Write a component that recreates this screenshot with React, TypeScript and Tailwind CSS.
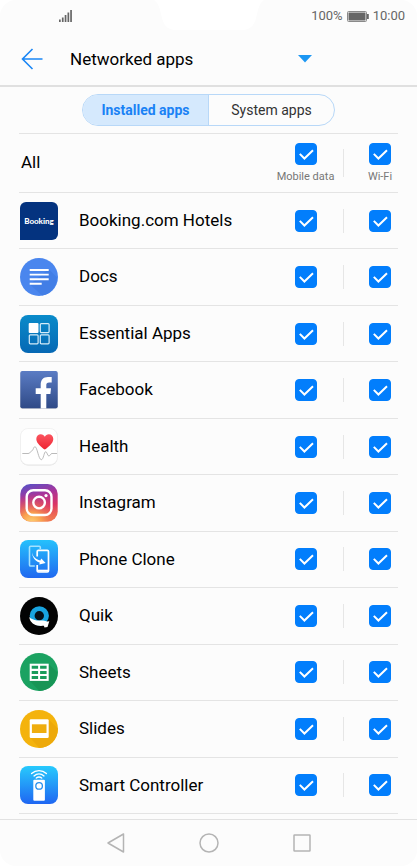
import { useState, type ReactNode } from 'react';
import clsx from 'clsx';

type Access = { mobile: boolean; wifi: boolean };

function BookingIcon() {
  return (
    <span className="flex size-[38px] items-center justify-center rounded-md rounded-bl-none bg-[#04337f] font-['Lato'] text-[8px] font-black text-white">
      Booking
    </span>
  );
}

function DocsIcon() {
  return (
    <svg viewBox="0 0 38 38" className="size-[38px]">
      <circle cx="19" cy="19" r="19" fill="#4a86ee" />
      <path d="M28.7 11 37 19.5A19 19 0 0 1 22 37.6L10 26.5Z" fill="#427ee6" />
      <path d="M9.7 12h19M9.7 16.6h19M9.7 21.2h19M9.7 25.7h12" stroke="#fff" strokeWidth="1.9" />
    </svg>
  );
}

function EssentialIcon() {
  return (
    <svg viewBox="0 0 38 38" className="size-[38px]">
      <defs>
        <linearGradient id="essential" x1="0" y1="0" x2="0" y2="1">
          <stop offset="0" stopColor="#0a8bca" />
          <stop offset="1" stopColor="#0668b4" />
        </linearGradient>
      </defs>
      <rect width="38" height="38" rx="8" fill="url(#essential)" />
      <rect x="8.7" y="8" width="9.8" height="10" rx="1" fill="#fff" />
      <g fill="none" stroke="#d6ecf8" strokeWidth="1.2">
        <rect x="20.3" y="8.6" width="8.8" height="9" rx="1" />
        <rect x="9.3" y="19.8" width="8.8" height="9" rx="1" />
        <rect x="20.3" y="19.8" width="8.8" height="9" rx="1" />
      </g>
    </svg>
  );
}

function FacebookIcon() {
  return (
    <svg viewBox="0 0 38 38" className="size-[38px]">
      <defs>
        <linearGradient id="facebook" x1="0" y1="0" x2="0" y2="1">
          <stop offset="0" stopColor="#5b7cc4" />
          <stop offset="1" stopColor="#2f4a87" />
        </linearGradient>
      </defs>
      <rect x="0.3" y="0.5" width="37.4" height="37.5" rx="2" fill="#c9ccd4" />
      <rect x="0.3" y="0" width="37.4" height="37.2" rx="2" fill="url(#facebook)" />
      <path
        d="M20.7 37.5V23h-5v-5.7h5v-3.6c0-5 2.8-7.7 7.2-7.7h3.8v5.5h-2.6c-2.1 0-2.8.9-2.8 2.6v3.2H31l-.6 5.7h-4.1v14.5z"
        fill="#fff"
      />
    </svg>
  );
}

function HealthIcon() {
  return (
    <svg viewBox="0 0 38 38" className="size-[38px]">
      <defs>
        <linearGradient id="heart" x1="0" y1="0" x2="0" y2="1">
          <stop offset="0" stopColor="#fb5560" />
          <stop offset="1" stopColor="#ee2431" />
        </linearGradient>
      </defs>
      <rect x="0.5" y="1" width="37" height="36.5" rx="7.5" fill="#dedede" />
      <rect x="0.5" y="0.5" width="37" height="36.2" rx="7.5" fill="#fff" stroke="#efefef" strokeWidth="0.8" />
      <path
        d="M24.8 21.6c-3.4-2.4-8.5-6.3-8.5-10.6 0-2.9 2.1-4.8 4.5-4.8 1.8 0 3.2.9 4 2.5.8-1.6 2.2-2.5 4-2.5 2.4 0 4.5 1.9 4.5 4.8 0 4.300-5.100 8.200-8.500 10.600z"
        fill="url(#heart)"
      />
      <path
        d="M2.300 25.500H8c1.500 0 2.200-.9 3-2 .8-1.300 1.300-.4 1.900-1.800.8-1.800 1.200-3 2.100-3 2.200 0 3.500 13 6.300 13 2.300 0 2.700-8 4.400-8 1.500 0 1.600 4.300 3.200 4.300 1.200 0 1.500-2.500 3.100-2.500h5"
        fill="none"
        stroke="#a9a9a9"
        strokeWidth="0.8"
      />
    </svg>
  );
}

function InstagramIcon() {
  return (
    <svg viewBox="0 0 38 38" className="size-[38px]">
      <defs>
        <linearGradient id="instaBase" x1="0.2" y1="0" x2="0.5" y2="1">
          <stop offset="0" stopColor="#5b4fc4" />
          <stop offset="0.35" stopColor="#a8349b" />
          <stop offset="0.7" stopColor="#dc3465" />
          <stop offset="1" stopColor="#f2764c" />
        </linearGradient>
        <radialGradient id="instaGlow" cx="0.3" cy="1.05" r="0.8">
          <stop offset="0" stopColor="#fed373" />
          <stop offset="0.35" stopColor="#f9a04f" />
          <stop offset="1" stopColor="#e0405c" stopOpacity="0" />
        </radialGradient>
      </defs>
      <rect x="0.3" width="37.4" height="37.4" rx="10" fill="url(#instaBase)" />
      <rect x="0.3" width="37.4" height="37.4" rx="10" fill="url(#instaGlow)" />
      <g fill="none" stroke="#fff" strokeWidth="2.4">
        <rect x="6.7" y="6.2" width="24.8" height="24.8" rx="6.5" />
        <circle cx="19.1" cy="18.6" r="5.8" />
      </g>
      <circle cx="26" cy="11.6" r="1.6" fill="#fff" />
    </svg>
  );
}

function PhoneCloneIcon() {
  return (
    <svg viewBox="0 0 38 38" className="size-[38px]">
      <defs>
        <linearGradient id="clone" x1="0" y1="0" x2="0" y2="1">
          <stop offset="0" stopColor="#25c1fc" />
          <stop offset="1" stopColor="#2068f0" />
        </linearGradient>
      </defs>
      <rect width="38" height="38" rx="8" fill="url(#clone)" />
      <path
        d="M20.300 9V7.300c0-.7-.4-1.100-1.100-1.100h-8.600c-.7 0-1.100.4-1.100 1.100v17.600c0 .7.4 1.100 1.100 1.100h4.200"
        fill="none"
        stroke="#a4e2ff"
        strokeWidth="1.6"
      />
      <path
        d="M17.200 16.500v-4.900c0-.7.5-1.200 1.200-1.200h8.900c.7 0 1.200.5 1.200 1.200v19.200c0 .7-.5 1.200-1.200 1.200h-8.900c-.7 0-1.200-.5-1.200-1.200v-5.900"
        fill="none"
        stroke="#fff"
        strokeWidth="1.7"
      />
      <path d="M17.200 29.700h11.300v2h-11.300z" fill="#fff" />
      <path d="M12 12.300c.8 4.200 3.500 7 8.300 8.200l1-2 4.300 4.400-6.300 1.700.4-2c-4.700-1.500-7.500-5.300-7.700-10.300z" fill="#fff" />
    </svg>
  );
}

function QuikIcon() {
  return (
    <svg viewBox="0 0 38 38" className="size-[38px]">
      <circle cx="19" cy="19" r="19" fill="#030303" />
      <circle cx="19.3" cy="18.8" r="9.6" fill="#18a4e0" />
      <circle cx="19.3" cy="18.8" r="4.7" fill="#061018" />
      <path
        d="M9.300 20c2.200 2.200 4.500 2.900 7.700 3.400 2 .4 4.400.1 6.200.2 1.600.1 2.800.9 4 .9l2.100-.3-1.800 5.800-3 .5-.6-1.700c-2.300.2-4.600.3-6.700-.3-4.500-1.200-7.600-4.300-7.900-8.500z"
        fill="#fff"
      />
    </svg>
  );
}

function SheetsIcon() {
  return (
    <svg viewBox="0 0 38 38" className="size-[38px]">
      <circle cx="19" cy="19" r="19" fill="#1ba261" />
      <path d="M28.700 11 37.500 19.600A19 19 0 0 1 19.500 38L9.700 27.700Z" fill="#189556" />
      <rect x="9.7" y="10.7" width="19" height="17.2" fill="#fff" />
      <path
        d="M11.700 12.800h6.400v3h-6.400zM20.100 12.800h6.500v3h-6.500zM11.700 17.900h6.400v3h-6.400zM20.100 17.900h6.500v3h-6.500zM11.700 22.900h6.400v3h-6.400zM20.100 22.900h6.500v3h-6.500z"
        fill="#199c5b"
      />
    </svg>
  );
}

function SlidesIcon() {
  return (
    <svg viewBox="0 0 38 38" className="size-[38px]">
      <circle cx="19" cy="19" r="19" fill="#f4b30d" />
      <path d="M28.500 9.300 37.800 18.600A19 19 0 0 1 19.500 38L10 27.800Z" fill="#eda90a" />
      <rect x="9.7" y="9.2" width="19" height="18.8" rx="1.2" fill="#fff" />
      <rect x="11.9" y="14.3" width="14.6" height="8.7" fill="#efad0e" />
    </svg>
  );
}

function SmartControllerIcon() {
  return (
    <svg viewBox="0 0 38 38" className="size-[38px]">
      <defs>
        <linearGradient id="remote" x1="0" y1="0" x2="0" y2="1">
          <stop offset="0" stopColor="#27cafd" />
          <stop offset="1" stopColor="#1f66f2" />
        </linearGradient>
      </defs>
      <rect width="38" height="38" rx="8" fill="url(#remote)" />
      <g fill="none" stroke="#fff" strokeWidth="1.4" strokeLinecap="round">
        <path d="M11.600 7.600c4.300-4 10.500-4 14.800 0" />
        <path d="M14 9.900c3-2.700 7-2.700 10 0" />
        <path d="M16.300 12c1.700-1.300 3.700-1.300 5.400 0" />
      </g>
      <rect x="13.3" y="13.8" width="11.6" height="21" rx="1" fill="#fff" />
      <circle cx="19.1" cy="19.9" r="3.3" fill="none" stroke="#258fee" strokeWidth="1.3" />
    </svg>
  );
}

const apps: { name: string; icon: ReactNode }[] = [
  { name: 'Booking.com Hotels', icon: <BookingIcon /> },
  { name: 'Docs', icon: <DocsIcon /> },
  { name: 'Essential Apps', icon: <EssentialIcon /> },
  { name: 'Facebook', icon: <FacebookIcon /> },
  { name: 'Health', icon: <HealthIcon /> },
  { name: 'Instagram', icon: <InstagramIcon /> },
  { name: 'Phone Clone', icon: <PhoneCloneIcon /> },
  { name: 'Quik', icon: <QuikIcon /> },
  { name: 'Sheets', icon: <SheetsIcon /> },
  { name: 'Slides', icon: <SlidesIcon /> },
  { name: 'Smart Controller', icon: <SmartControllerIcon /> },
];

function CheckBox({ label, checked, onChange }: { label: string; checked: boolean; onChange: () => void }) {
  return (
    <span className="relative block size-[22px]">
      <input
        type="checkbox"
        aria-label={label}
        checked={checked}
        onChange={onChange}
        className="block size-[22px] cursor-pointer appearance-none rounded border border-gray-400 peer checked:border-[#027efc] checked:bg-[#027efc]"
      />
      <svg viewBox="0 0 22 22" className="pointer-events-none absolute inset-0 hidden size-[22px] peer-checked:block">
        <path d="M4.800 10.900 9.400 15.500 18 7.300" fill="none" stroke="#fff" strokeWidth="2" />
      </svg>
    </span>
  );
}

function StatusBar() {
  return (
    <div className="relative flex h-8 items-center justify-between pr-3 pl-[59px] text-[13px] text-[#666]">
      {/* display notch */}
      <svg viewBox="0 0 110 31" className="absolute top-0 left-1/2 h-[31px] w-[110px] -translate-x-1/2">
        <path d="M0 0c6 4 6 12 8 18 2 8 6 12 14 12h66c8 0 12-4 14-12 2-6 2-14 8-18z" fill="#fff" />
      </svg>
      <svg viewBox="0 0 14 12" className="h-3 w-3.5" fill="#666">
        <path d="M0 9.500h1.700V12H0zM2.900 7.500h1.700V12H2.900zM5.700 5h1.700v7H5.700zM8.500 2.500h1.700V12H8.500zM11.200 0h1.700v12h-1.700z" />
      </svg>
      <div className="flex items-center gap-1">
        <span>100%</span>
        <svg viewBox="0 0 22 11" className="h-[11px] w-[22px]">
          <rect x="0.5" y="0.5" width="19" height="10" rx="1" fill="none" stroke="#8a8a8a" />
          <rect x="1.5" y="1.5" width="17" height="8" fill="#666" />
          <path d="M20 3h1.800v5H20z" fill="#666" />
        </svg>
        <span>10:00</span>
      </div>
    </div>
  );
}

export default function App() {
  const [tab, setTab] = useState<'installed' | 'system'>('installed');
  const [access, setAccess] = useState<Access[]>(apps.map(() => ({ mobile: true, wifi: true })));

  const toggle = (index: number, key: keyof Access) =>
    setAccess((rows) => rows.map((row, i) => (i === index ? { ...row, [key]: !row[key] } : row)));

  const allOn = (key: keyof Access) => access.every((row) => row[key]);

  const toggleAll = (key: keyof Access) => {
    const next = !allOn(key);
    setAccess((rows) => rows.map((row) => ({ ...row, [key]: next })));
  };

  return (
    <div className="flex min-h-screen flex-col rounded-2xl bg-[#fcfcfc] font-['Roboto',sans-serif] text-black">
      <StatusBar />

      <header className="flex h-[55px] items-center border-b-2 border-[#e0e0e0] pl-[21px]">
        <button type="button" aria-label="Back" className="cursor-pointer">
          <svg viewBox="0 0 22 22" className="size-[22px]" fill="none" stroke="#1a86f5" strokeWidth="1.6">
            <path d="M21.500 11H1.500M11.500 1 1.500 11l10 10" />
          </svg>
        </button>
        <div className="relative ml-[27px] w-[242px]">
          <select aria-label="View" className="w-full appearance-none bg-transparent text-[17px] leading-7">
            <option>Networked apps</option>
          </select>
          <svg viewBox="0 0 14 8" className="pointer-events-none absolute top-1/2 right-0 h-2 w-3.5 -translate-y-1/2">
            <path d="M0 0h14L7 7.500z" fill="#1c97f3" />
          </svg>
        </div>
      </header>

      <main className="flex flex-1 flex-col px-[19px] pb-[5px]">
        <div className="my-[7px] flex h-8 w-[253px] self-center overflow-hidden rounded-full border border-[#b8d8f8] text-sm">
          <button
            type="button"
            aria-pressed={tab === 'installed'}
            onClick={() => setTab('installed')}
            className={clsx(
              'flex-1 cursor-pointer border-r border-[#b8d8f8]',
              tab === 'installed' ? 'bg-[#d5e9fd] font-bold text-[#1a82f5]' : 'text-[#333]',
            )}
          >
            Installed apps
          </button>
          <button
            type="button"
            aria-pressed={tab === 'system'}
            onClick={() => setTab('system')}
            className={clsx(
              'flex-1 cursor-pointer',
              tab === 'system' ? 'bg-[#d5e9fd] font-bold text-[#1a82f5]' : 'text-[#333]',
            )}
          >
            System apps
          </button>
        </div>

        <div className="flex h-[60px] items-center border-y border-[#e4e4e4]">
          <span className="flex-1 pl-0.5 text-[17px]">All</span>
          <div className="flex w-[75px] flex-col items-center gap-1 pt-0.5">
            <CheckBox label="Mobile data, all apps" checked={allOn('mobile')} onChange={() => toggleAll('mobile')} />
            <span className="text-[11px] leading-4 text-[#777]">Mobile data</span>
          </div>
          <span className="mr-[18px] h-7 w-px bg-[#e6e6e6]" />
          <div className="flex w-9 flex-col items-center gap-1 pt-0.5">
            <CheckBox label="Wi-Fi, all apps" checked={allOn('wifi')} onChange={() => toggleAll('wifi')} />
            <span className="text-[11px] leading-4 text-[#777]">Wi-Fi</span>
          </div>
        </div>

        <ul className="flex flex-1 flex-col">
          {apps.map((app, i) => (
            <li key={app.name} className="flex min-h-14 flex-1 items-center border-b border-[#e4e4e4] pl-px">
              {app.icon}
              <span className="flex-1 pl-[21px] text-[17px]">{app.name}</span>
              <div className="flex w-[75px] justify-center">
                <CheckBox
                  label={`${app.name}, mobile data`}
                  checked={access[i].mobile}
                  onChange={() => toggle(i, 'mobile')}
                />
              </div>
              <span className="mr-[18px] h-6 w-px bg-[#e6e6e6]" />
              <div className="flex w-9 justify-center">
                <CheckBox label={`${app.name}, Wi-Fi`} checked={access[i].wifi} onChange={() => toggle(i, 'wifi')} />
              </div>
            </li>
          ))}
        </ul>
      </main>

      <nav className="flex h-[47px] items-center justify-center gap-[69px] border-t border-[#e2e2e2]">
        <button type="button" aria-label="Back" className="cursor-pointer">
          <svg viewBox="0 0 24 24" className="size-6" fill="none" stroke="#b4b4b4" strokeWidth="1.5" strokeLinejoin="round">
            <path d="M19.500 3v18L4 12z" />
          </svg>
        </button>
        <button type="button" aria-label="Home" className="cursor-pointer">
          <svg viewBox="0 0 24 24" className="size-6" fill="none" stroke="#b4b4b4" strokeWidth="1.5">
            <circle cx="12" cy="12" r="9" />
          </svg>
        </button>
        <button type="button" aria-label="Recent apps" className="cursor-pointer">
          <svg viewBox="0 0 24 24" className="size-6" fill="none" stroke="#b4b4b4" strokeWidth="1.5">
            <rect x="4" y="4" width="16" height="16" rx="0.5" />
          </svg>
        </button>
      </nav>
    </div>
  );
}
